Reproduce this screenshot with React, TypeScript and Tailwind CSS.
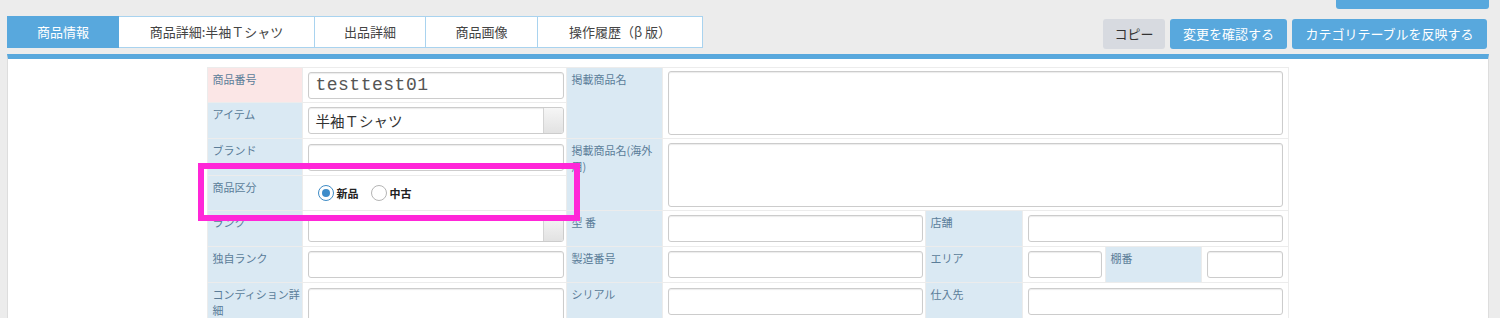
import type { ReactNode } from 'react';

const label =
  "bg-[#dae9f3] text-[#5b7d99] text-[11px] leading-[16px] align-top pt-[3px] pl-[4px] border border-[#ececec] font-normal text-left";
const cell = "px-[5px] border border-[#ececec] align-middle";
// narrower right padding for the first and second input columns
const cellN = "pl-[5px] pr-[2px] border border-[#ececec] align-middle";
const box =
  "block w-full rounded-[3px] border border-[#cccccc] bg-white shadow-[inset_0_1px_1px_rgba(0,0,0,0.08)] outline-none";

function TextInput({ value = "", className = "" }: { value?: string; className?: string }) {
  return <input readOnly value={value} className={`${box} h-[27px] px-[6px] ${className}`} />;
}

function Area({ className = "" }: { className?: string }) {
  return <textarea readOnly className={`${box} resize-none ${className}`} />;
}

function Select({ children }: { children?: ReactNode }) {
  return (
    <div className={`${box} h-[27px] flex items-stretch overflow-hidden`}>
      <div className="flex-1 flex items-center pl-[6px] text-[14.5px] text-[#333]">{children}</div>
      <div className="w-[20px] border-l border-[#d4d4d4] bg-gradient-to-b from-[#f6f6f6] to-[#e2e2e2]" />
    </div>
  );
}

function Radio({ checked, text }: { checked?: boolean; text: string }) {
  return (
    <label className="flex items-center gap-[2px]">
      <span
        className={`w-[16px] h-[16px] rounded-full border bg-white flex items-center justify-center ${
          checked ? "border-[#3f8cc6] border-[1.5px]" : "border-[#b5b5b5]"
        }`}
      >
        {checked && <span className="w-[8px] h-[8px] rounded-full bg-[#3d8cca]" />}
      </span>
      <span className="text-[11px] font-bold text-[#222]">{text}</span>
    </label>
  );
}

const tabs = [
  { name: "商品情報", w: "w-[112px]", active: true },
  { name: "商品詳細:半袖Ｔシャツ", w: "w-[196px]" },
  { name: "出品詳細", w: "w-[111px]" },
  { name: "商品画像", w: "w-[112px]" },
  { name: "操作履歴（β 版）", w: "w-[165px]" },
];

export default function App() {
  return (
    <div className="relative h-[318px] overflow-hidden bg-[#ececec] font-['Noto_Sans_CJK_JP','Noto_Sans',sans-serif]">
      {/* button cut off at the top */}
      <div className="h-[9px] w-[153px] ml-auto mr-[11px] rounded-b-[3px] bg-[#58a8dd]" />

      {/* tabs + actions */}
      <div className="mt-[7px] pl-[7px] pr-[13px] flex items-start justify-between">
        <div className="flex">
          {tabs.map((t) => (
            <div
              key={t.name}
              className={`${t.w} h-[32px] flex items-center justify-center text-[13px] border-y border-r first:border-l ${
                t.active
                  ? "bg-[#58a8dd] border-[#58a8dd] text-white"
                  : "bg-white border-[#a9d3ef] text-[#444]"
              }`}
            >
              {t.name}
            </div>
          ))}
        </div>
        <div className="mt-[3px] flex gap-[5px] text-[13px]">
          <button className="h-[30px] w-[62px] rounded-[3px] bg-[#d7dae0] text-[#333]">コピー</button>
          <button className="h-[30px] w-[117px] rounded-[3px] bg-[#58a8dd] text-white">変更を確認する</button>
          <button className="h-[30px] w-[195px] rounded-[3px] bg-[#58a8dd] text-white">カテゴリテーブルを反映する</button>
        </div>
      </div>

      {/* panel */}
      <div className="mt-[5px] ml-[7px] mr-[11px] border-t-[5px] border-t-[#58a8dd] border-x border-x-[#dddddd] bg-white pt-[8px] pb-4">
        <table className="w-[1080px] mx-auto table-fixed border-collapse border border-[#e6e6e6]">
          <colgroup>
            <col className="w-[95px]" />
            <col className="w-[264px]" />
            <col className="w-[96px]" />
            <col className="w-[263px]" />
            <col className="w-[97px]" />
            <col className="w-[83px]" />
            <col className="w-[96px]" />
            <col className="w-[86px]" />
          </colgroup>
          <tbody>
            <tr className="h-[35px]">
              <th className={`${label} bg-[#fbe6e6]`}>商品番号</th>
              <td className={cellN}>
                <TextInput value="testtest01" className="font-['Liberation_Mono',monospace] text-[18px] text-[#555] tracking-[0.5px]" />
              </td>
              <th rowSpan={2} className={`${label} pr-[4px]`}>掲載商品名</th>
              <td rowSpan={2} colSpan={5} className={cell}>
                <Area className="h-[64px]" />
              </td>
            </tr>
            <tr className="h-[36px]">
              <th className={label}>アイテム</th>
              <td className={cellN}>
                <Select>半袖Ｔシャツ</Select>
              </td>
            </tr>
            <tr className="h-[37px]">
              <th className={label}>ブランド</th>
              <td className={cellN}>
                <TextInput />
              </td>
              <th rowSpan={2} className={`${label} pr-[4px]`}>掲載商品名(海外用)</th>
              <td rowSpan={2} colSpan={5} className={cell}>
                <Area className="h-[64px]" />
              </td>
            </tr>
            <tr className="h-[35px]">
              <th className={label}>商品区分</th>
              <td className={`${cellN} pl-[15px]`}>
                <div className="flex items-center gap-[13px]">
                  <Radio checked text="新品" />
                  <Radio text="中古" />
                </div>
              </td>
            </tr>
            <tr className="h-[36px]">
              <th className={label}>ランク</th>
              <td className={cellN}>
                <Select />
              </td>
              <th className={`${label} pr-[4px]`}>型 番</th>
              <td className={cellN}>
                <TextInput />
              </td>
              <th className={label}>店舗</th>
              <td colSpan={3} className={cell}>
                <TextInput />
              </td>
            </tr>
            <tr className="h-[36px]">
              <th className={label}>独自ランク</th>
              <td className={cellN}>
                <TextInput />
              </td>
              <th className={`${label} pr-[4px]`}>製造番号</th>
              <td className={cellN}>
                <TextInput />
              </td>
              <th className={label}>エリア</th>
              <td className={`${cell} pr-[3px]`}>
                <TextInput />
              </td>
              <th className={label}>棚番</th>
              <td className={cell}>
                <TextInput />
              </td>
            </tr>
            <tr className="h-[70px]">
              <th className={label}>コンディション詳細</th>
              <td className={`${cellN} align-top pt-[5px]`}>
                <Area className="h-[60px]" />
              </td>
              <th className={`${label} pr-[4px]`}>シリアル</th>
              <td className={`${cellN} align-top pt-[5px]`}>
                <TextInput />
              </td>
              <th className={label}>仕入先</th>
              <td colSpan={3} className={`${cell} align-top pt-[5px]`}>
                <TextInput />
              </td>
            </tr>
          </tbody>
        </table>
      </div>

      {/* highlight annotation */}
      <div className="absolute left-[198px] top-[163px] w-[382px] h-[58px] border-[6px] border-[#ff26d8] pointer-events-none" />
    </div>
  );
}
